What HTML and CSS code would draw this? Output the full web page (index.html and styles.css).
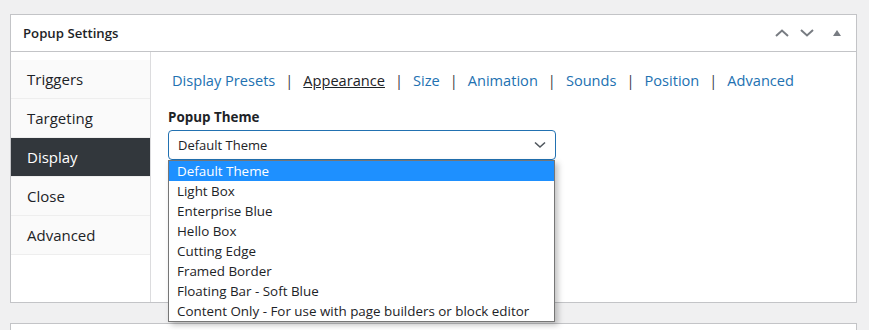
FILE: index.html
```html
<!DOCTYPE html>
<html lang="en">
<head>
    <meta charset="UTF-8">
    <meta name="viewport" content="width=device-width, initial-scale=1.0">
    <title>Popup Settings</title>
    <link rel="stylesheet" href="styles.css">
</head>
<body>

<div class="postbox">
    <div class="postbox-header">
        <h2>Popup Settings</h2>
        <div class="handle-actions">
            <span class="handle-btn">
                <svg width="14" height="8" viewBox="0 0 14 8"><path d="M1 7 L7 1.5 L13 7" fill="none" stroke="#787c82" stroke-width="2"/></svg>
            </span>
            <span class="handle-btn">
                <svg width="14" height="8" viewBox="0 0 14 8"><path d="M1 1 L7 6.5 L13 1" fill="none" stroke="#787c82" stroke-width="2"/></svg>
            </span>
            <span class="handle-btn toggle">
                <svg width="8" height="6" viewBox="0 0 8 6"><path d="M0 6 L4 0 L8 6 Z" fill="#787c82"/></svg>
            </span>
        </div>
    </div>

    <div class="postbox-body">
        <ul class="tabs">
            <li>Triggers</li>
            <li>Targeting</li>
            <li class="active">Display</li>
            <li>Close</li>
            <li>Advanced</li>
        </ul>

        <div class="tab-content">
            <div class="subtabs">
                <a href="#">Display Presets</a><span class="sep">|</span>
                <a href="#" class="current">Appearance</a><span class="sep">|</span>
                <a href="#">Size</a><span class="sep">|</span>
                <a href="#">Animation</a><span class="sep">|</span>
                <a href="#">Sounds</a><span class="sep">|</span>
                <a href="#">Position</a><span class="sep">|</span>
                <a href="#">Advanced</a>
            </div>

            <div class="field">
                <label class="field-label">Popup Theme</label>
                <div class="select-wrap">
                    <div class="select">
                        <span>Default Theme</span>
                        <svg width="12" height="8" viewBox="0 0 12 8"><path d="M1 1.5 L6 6 L11 1.5" fill="none" stroke="#50575e" stroke-width="1.6"/></svg>
                    </div>
                    <ul class="options">
                        <li class="selected">Default Theme</li>
                        <li>Light Box</li>
                        <li>Enterprise Blue</li>
                        <li>Hello Box</li>
                        <li>Cutting Edge</li>
                        <li>Framed Border</li>
                        <li>Floating Bar - Soft Blue</li>
                        <li>Content Only - For use with page builders or block editor</li>
                    </ul>
                </div>
            </div>
        </div>
    </div>
</div>

<div class="postbox next"></div>

</body>
</html>
```

FILE: styles.css
```css
* {
    box-sizing: border-box;
}

body {
    font-family: "Segoe UI", "Open Sans", sans-serif;
    margin: 0;
    padding: 14px 12px 0 10px;
    background-color: #f0f0f1;
    color: #1d2327;
    overflow: hidden;
    height: 330px;
}

.postbox {
    background-color: #fff;
    border: 1px solid #c3c4c7;
}

.postbox.next {
    margin-top: 20px;
    height: 20px;
    border-bottom: none;
}

.postbox-header {
    display: flex;
    align-items: center;
    justify-content: space-between;
    height: 37px;
    border-bottom: 1px solid #c3c4c7;
}

.postbox-header h2 {
    margin: 0 0 0 12px;
    font-size: 13.2px;
    font-weight: 600;
}

.handle-actions {
    display: flex;
    align-items: center;
}

.handle-btn {
    display: flex;
    justify-content: center;
    width: 25px;
}

.handle-btn.toggle {
    width: 37px;
    justify-content: flex-end;
    padding-right: 15px;
}

.postbox-body {
    display: flex;
    height: 250px;
}

.tabs {
    list-style: none;
    margin: 0;
    padding: 8px 0 0 0;
    width: 140px;
    border-right: 1px solid #dcdcde;
}

.tabs li {
    height: 39px;
    line-height: 38px;
    padding-left: 16px;
    font-size: 15px;
    background-color: #fafafa;
    border-bottom: 1px solid #eee;
}

.tabs li.active {
    background-color: #32373c;
    color: #fff;
}

.tab-content {
    flex: 1;
    padding: 16px 0 0 17px;
}

.subtabs {
    display: flex;
    align-items: center;
    font-size: 14.6px;
    line-height: 24px;
    padding-left: 4px;
}

.subtabs a {
    color: #2271b1;
    text-decoration: none;
}

.subtabs a.current {
    color: #1d2327;
    text-decoration: underline;
}

.subtabs .sep {
    color: #3c434a;
    margin: 0 10px;
}

.field {
    margin-top: 16px;
}

.field-label {
    display: block;
    font-size: 13.4px;
    font-weight: 700;
    margin-bottom: 4px;
}

.select-wrap {
    position: relative;
    width: 388px;
}

.select {
    display: flex;
    align-items: center;
    justify-content: space-between;
    height: 30px;
    padding: 0 9px;
    border: 1px solid #2271b1;
    border-radius: 4px;
    font-size: 13px;
}

.options {
    position: absolute;
    top: 30px;
    left: 0;
    width: 387px;
    margin: 0;
    padding: 0;
    list-style: none;
    background-color: #fff;
    border: 1px solid #767676;
    box-shadow: 3px 3px 6px rgba(0, 0, 0, 0.25);
    font-size: 13.4px;
    z-index: 2;
}

.options li {
    height: 20px;
    line-height: 20px;
    padding-left: 8px;
}

.options li.selected {
    background-color: #1e90ff;
    color: #fff;
}
```
